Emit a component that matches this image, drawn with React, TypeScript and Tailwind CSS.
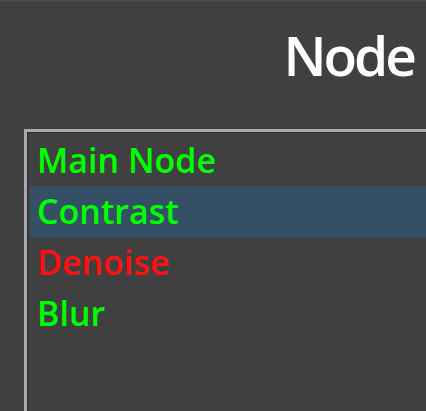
const nodes = [
  { name: "Main Node", color: "text-[#00ff00]" },
  { name: "Contrast", color: "text-[#00ff00]", selected: true },
  { name: "Denoise", color: "text-[#ff1010]" },
  { name: "Blur", color: "text-[#00ff00]" },
];

export default function App() {
  return (
    <div
      className="h-[411px] w-[426px] overflow-hidden bg-[#404040] border-t-2 border-[#4a4a4a]"
      style={{ fontFamily: '"Open Sans", "Noto Sans", sans-serif' }}
    >
      <div className="flex justify-end pr-[12px] pt-[18px] h-[98px]">
        <h1 className="text-[55px] font-semibold leading-[70px] text-white tracking-[-3px]">Node</h1>
      </div>
      <div className="ml-[24px] mt-[29px] h-[300px] border-l-[3px] border-t-[3px] border-[#a6aab2]">
        <ul className="h-full border-l border-t border-[#2c2c2c] pt-[2px] pl-[2px]">
          {nodes.map((n) => (
            <li
              key={n.name}
              className={`h-[51px] pl-[7px] text-[34px] font-semibold leading-[51px] ${n.color} ${
                n.selected ? "bg-[#344f66]" : ""
              }`}
            >
              {n.name}
            </li>
          ))}
        </ul>
      </div>
    </div>
  );
}
